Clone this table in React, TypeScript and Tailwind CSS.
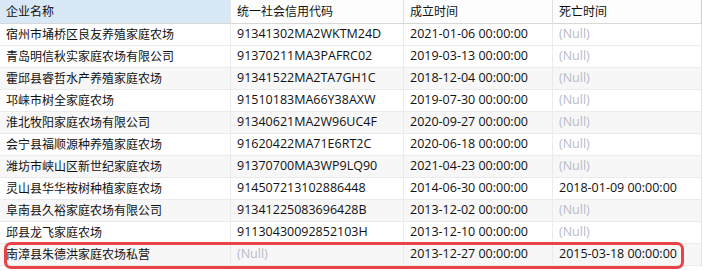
const rows: [string, string | null, string, string | null][] = [
  ["宿州市埇桥区良友养殖家庭农场", "91341302MA2WKTM24D", "2021-01-06 00:00:00", null],
  ["青岛明信秋实家庭农场有限公司", "91370211MA3PAFRC02", "2019-03-13 00:00:00", null],
  ["霍邱县睿哲水产养殖家庭农场", "91341522MA2TA7GH1C", "2018-12-04 00:00:00", null],
  ["邛崃市树全家庭农场", "91510183MA66Y38AXW", "2019-07-30 00:00:00", null],
  ["淮北牧阳家庭农场有限公司", "91340621MA2W96UC4F", "2020-09-27 00:00:00", null],
  ["会宁县福顺源种养殖家庭农场", "91620422MA71E6RT2C", "2020-06-18 00:00:00", null],
  ["潍坊市峡山区新世纪家庭农场", "91370700MA3WP9LQ90", "2021-04-23 00:00:00", null],
  ["灵山县华华桉树种植家庭农场", "914507213102886448", "2014-06-30 00:00:00", "2018-01-09 00:00:00"],
  ["阜南县久裕家庭农场有限公司", "91341225083696428B", "2013-12-02 00:00:00", null],
  ["邱县龙飞家庭农场", "91130430092852103H", "2013-12-10 00:00:00", null],
  ["南漳县朱德洪家庭农场私营", null, "2013-12-27 00:00:00", "2015-03-18 00:00:00"],
];

const Cell = ({ value, last, latin }: { value: string | null; last?: boolean; latin?: boolean }) => (
  <div
    className={`h-[22px] flex items-center pl-[6px] border-b border-[#ebebeb] ${
      last ? "border-r border-r-[#e3e3e3]" : "border-r border-r-[#ebebeb]"
    } ${latin ? "text-[12.5px]" : "text-[12px]"} whitespace-nowrap overflow-hidden`}
  >
    {value === null ? <span className="text-[#b7bac8]">(Null)</span> : value}
  </div>
);

export default function App() {
  return (
    <div
      className="relative w-[703px] h-[271px] bg-white overflow-hidden text-[12px] text-[#111]"
      style={{ fontFamily: '"Open Sans", "Noto Sans CJK SC", sans-serif' }}
    >
      <div className="grid grid-cols-[231px_173px_149px_149px]">
        <div className="h-[24px] flex items-center pl-[6px] bg-[#d9e8f6] border-b border-[#d8d8d8] border-r border-r-[#e6e6e6]">
          企业名称
        </div>
        <div className="h-[24px] flex items-center pl-[6px] bg-[#fdfdfd] border-b border-[#d8d8d8] border-r border-r-[#e0e0e0]">
          统一社会信用代码
        </div>
        <div className="h-[24px] flex items-center pl-[6px] bg-[#fdfdfd] border-b border-[#d8d8d8] border-r border-r-[#e0e0e0]">
          成立时间
        </div>
        <div className="h-[24px] flex items-center pl-[6px] bg-[#fdfdfd] border-b border-[#d8d8d8] border-r border-r-[#d0d0d0]">
          死亡时间
        </div>
        {rows.map((r, i) => (
          <div key={i} className={`contents ${i % 2 === 0 && i !== 0 ? "[&>div]:bg-[#f7f7f7]" : "[&>div]:bg-white"}`}>
            <Cell value={r[0]} />
            <Cell value={r[1]} latin />
            <Cell value={r[2]} latin />
            <Cell value={r[3]} latin last />
          </div>
        ))}
      </div>
      <div className="absolute left-[4px] top-[242px] w-[680px] h-[27px] border-[3px] border-[#ea4346] rounded-[7px]" />
    </div>
  );
}
